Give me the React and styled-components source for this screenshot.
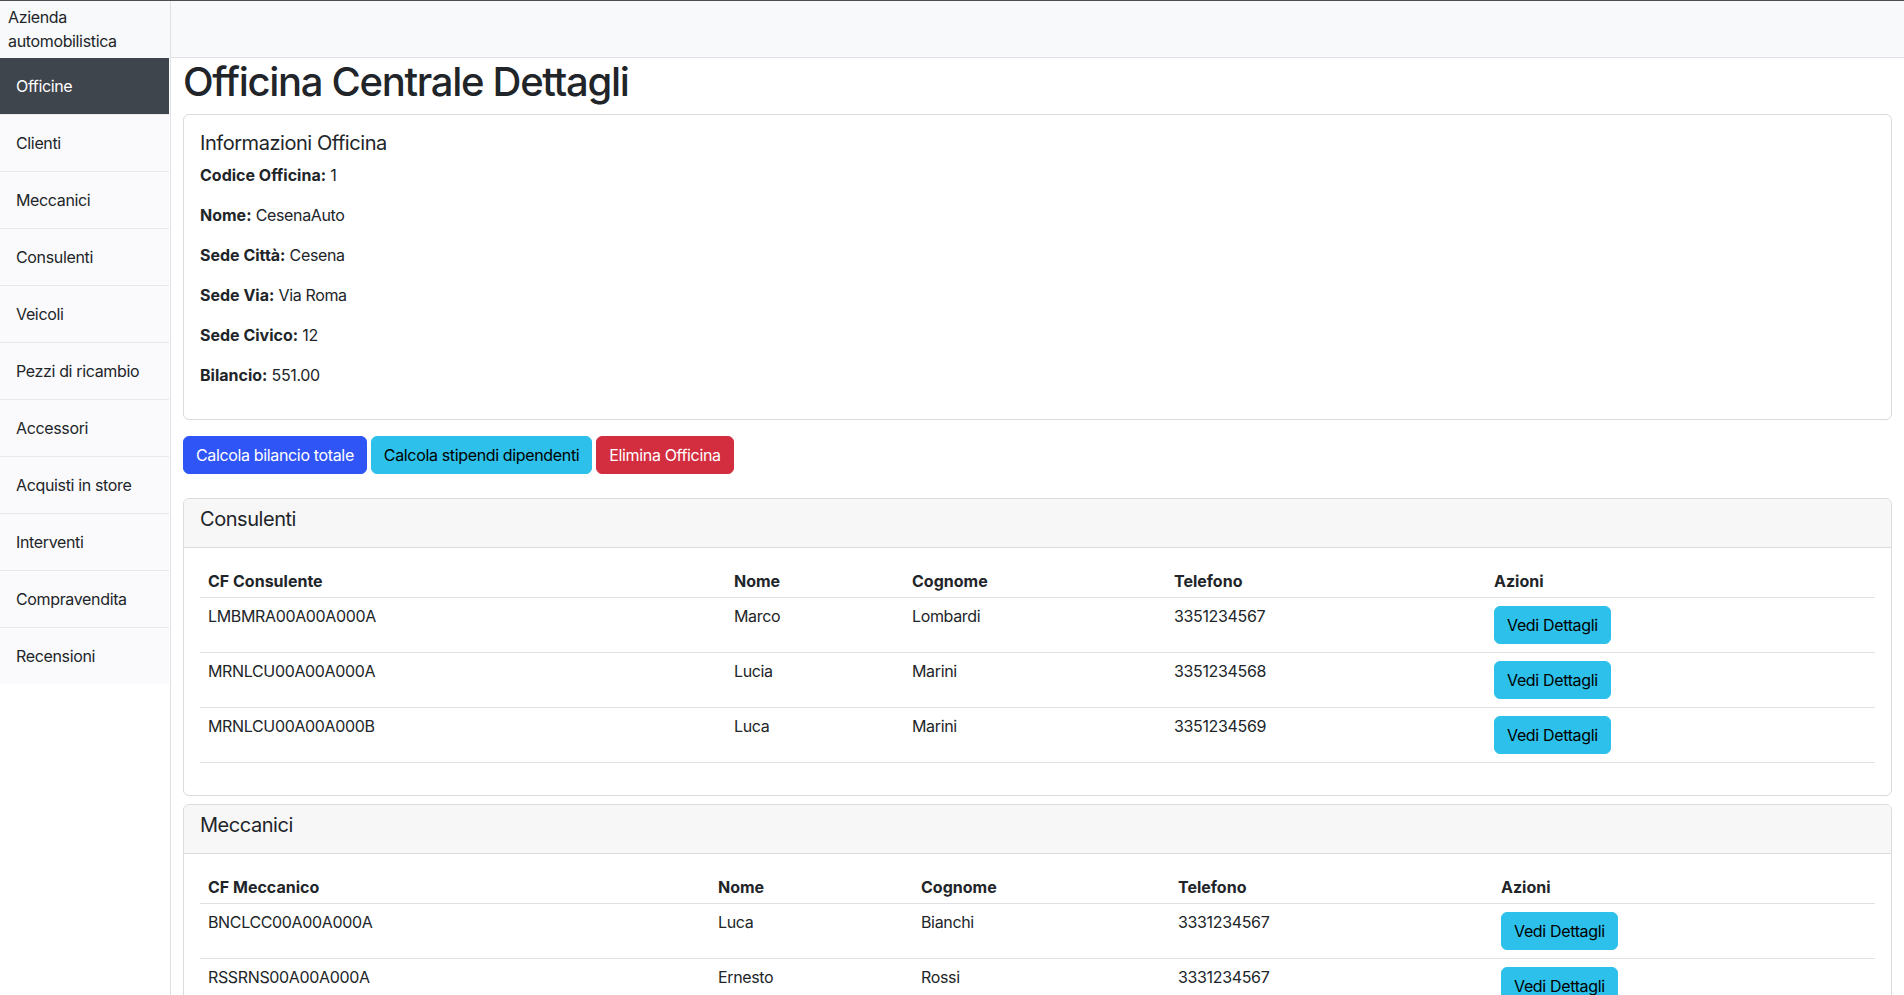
import React from "react";
import styled, { createGlobalStyle } from "styled-components";

const GlobalStyle = createGlobalStyle`
  * { box-sizing: border-box; }
  body {
    margin: 0;
    border-top: 1px solid #4a4d52;
    font-family: Inter, "Noto Sans", "Liberation Sans", sans-serif;
    font-size: 16px;
    line-height: 24px;
    letter-spacing: -0.35px;
    color: #212529;
    background: #fff;
  }
  b, th { letter-spacing: 0; }
`;

const menu = [
  "Officine",
  "Clienti",
  "Meccanici",
  "Consulenti",
  "Veicoli",
  "Pezzi di ricambio",
  "Accessori",
  "Acquisti in store",
  "Interventi",
  "Compravendita",
  "Recensioni",
];

const info = [
  ["Codice Officina:", "1"],
  ["Nome:", "CesenaAuto"],
  ["Sede Città:", "Cesena"],
  ["Sede Via:", "Via Roma"],
  ["Sede Civico:", "12"],
  ["Bilancio:", "551.00"],
];

const consulenti = [
  ["LMBMRA00A00A000A", "Marco", "Lombardi", "3351234567"],
  ["MRNLCU00A00A000A", "Lucia", "Marini", "3351234568"],
  ["MRNLCU00A00A000B", "Luca", "Marini", "3351234569"],
];

const meccanici = [
  ["BNCLCC00A00A000A", "Luca", "Bianchi", "3331234567"],
  ["RSSRNS00A00A000A", "Ernesto", "Rossi", "3331234567"],
  ["VRDGPP00A00A000A", "Giuseppe", "Verdi", "3331234567"],
];

function App() {
  return (
    <>
      <GlobalStyle />
      <Layout>
        <Sidebar>
          <Brand>Azienda automobilistica</Brand>
          <Menu>
            {menu.map((m, i) => (
              <MenuItem key={m} $active={i === 0}>
                {m}
              </MenuItem>
            ))}
          </Menu>
        </Sidebar>
        <Main>
          <Topbar />
          <Content>
            <Title>Officina Centrale Dettagli</Title>
            <Card>
              <CardBody>
                <CardTitle>Informazioni Officina</CardTitle>
                {info.map(([k, v]) => (
                  <InfoLine key={k}>
                    <b>{k}</b> {v}
                  </InfoLine>
                ))}
              </CardBody>
            </Card>
            <Actions>
              <Btn $variant="primary">Calcola bilancio totale</Btn>
              <Btn $variant="info">Calcola stipendi dipendenti</Btn>
              <Btn $variant="danger">Elimina Officina</Btn>
            </Actions>
            <Section
              title="Consulenti"
              first="CF Consulente"
              cols={[526, 178, 262, 320]}
              rows={consulenti}
            />
            <Section
              title="Meccanici"
              first="CF Meccanico"
              cols={[510, 203, 257, 323]}
              rows={meccanici}
            />
          </Content>
        </Main>
      </Layout>
    </>
  );
}

function Section({ title, first, cols, rows }) {
  return (
    <ListCard>
      <CardHeader>
        <CardTitle>{title}</CardTitle>
      </CardHeader>
      <CardBody>
        <Table>
          <colgroup>
            {cols.map((w, i) => (
              <col key={i} style={{ width: w }} />
            ))}
            <col />
          </colgroup>
          <thead>
            <tr>
              <Th>{first}</Th>
              <Th>Nome</Th>
              <Th>Cognome</Th>
              <Th>Telefono</Th>
              <Th>Azioni</Th>
            </tr>
          </thead>
          <tbody>
            {rows.map((r) => (
              <tr key={r[0]}>
                {r.map((c, i) => (
                  <Td key={i}>{c}</Td>
                ))}
                <Td>
                  <Btn $variant="info">Vedi Dettagli</Btn>
                </Td>
              </tr>
            ))}
          </tbody>
        </Table>
      </CardBody>
    </ListCard>
  );
}

const Layout = styled.div`
  display: flex;
  min-height: 100vh;
`;

const Sidebar = styled.aside`
  width: 171px;
  flex-shrink: 0;
  border-right: 1px solid #dee2e6;
`;

const Brand = styled.div`
  height: 57px;
  padding: 4px 8px;
  background: #f8f9fa;
  color: #212529;
`;

const Menu = styled.nav`
  display: flex;
  flex-direction: column;
  margin-right: 1px;
`;

const MenuItem = styled.div`
  padding: 16px;
  background: ${(p) => (p.$active ? "#3f454d" : "#fafafc")};
  color: ${(p) => (p.$active ? "#fff" : "#212529")};
  border-bottom: 1px solid #e6e8ec;
  &:last-child {
    border-bottom: none;
  }
`;

const Main = styled.main`
  flex: 1;
  min-width: 0;
`;

const Topbar = styled.header`
  height: 57px;
  background: #f8f9fa;
  border-bottom: 1px solid #dee2e6;
`;

const Content = styled.div`
  padding: 0 12px;
`;

const Title = styled.h1`
  margin: 0 0 8px;
  font-size: 40px;
  font-weight: 500;
  line-height: 48px;
  letter-spacing: -1.3px;
`;

const Card = styled.section`
  border: 1px solid #d9dbde;
  border-radius: 6px;
  background: #fff;
`;

const ListCard = styled(Card)`
  margin-bottom: 8px;
  overflow: hidden;
`;

const CardBody = styled.div`
  padding: 16px;
`;

const CardHeader = styled.div`
  padding: 8px 16px;
  background: #f7f7f7;
  border-bottom: 1px solid #d9dbde;
`;

const CardTitle = styled.h5`
  margin: 0 0 8px;
  font-size: 20px;
  font-weight: 400;
  line-height: 24px;
  letter-spacing: -0.45px;
`;

const InfoLine = styled.p`
  margin: 0 0 16px;
  b {
    font-weight: 700;
  }
`;

const Actions = styled.div`
  display: flex;
  gap: 4px;
  margin: 16px 0 24px;
`;

const colors = {
  primary: ["#2f55f7", "#fff"],
  info: ["#2cc0ea", "#000"],
  danger: ["#d32e3f", "#fff"],
};

const Btn = styled.button`
  font-family: inherit;
  font-size: 16px;
  line-height: 24px;
  letter-spacing: -0.35px;
  padding: 6px 12px;
  border: 1px solid ${(p) => colors[p.$variant][0]};
  border-radius: 6px;
  background: ${(p) => colors[p.$variant][0]};
  color: ${(p) => colors[p.$variant][1]};
  cursor: pointer;
`;

const Table = styled.table`
  width: 100%;
  border-collapse: collapse;
  table-layout: fixed;
  margin-bottom: 16px;
`;

const Th = styled.th`
  text-align: left;
  font-weight: 700;
  padding: 5px 8px 4px;
  border-bottom: 1px solid #dee2e6;
`;

const Td = styled.td`
  padding: 8px;
  line-height: 20px;
  vertical-align: top;
  border-bottom: 1px solid #dee2e6;
`;

export default App;
